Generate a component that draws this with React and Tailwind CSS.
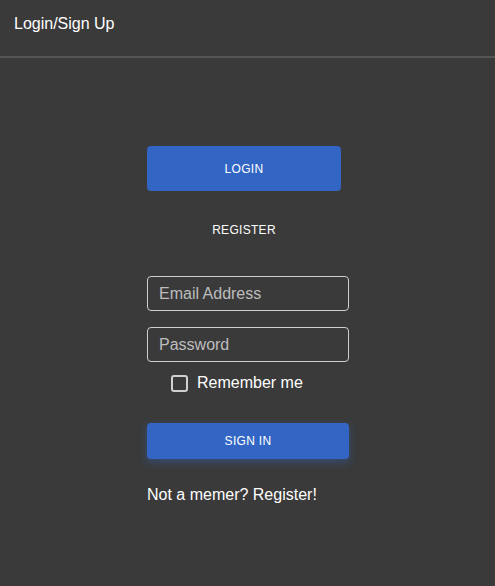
import { useState } from 'react'

const App = () => {
  const [remember, setRemember] = useState(false)

  return (
    <div className="min-h-screen bg-[#3a3a3a] text-white" style={{ fontFamily: '"Liberation Sans", Arial, sans-serif' }}>
      <header className="h-[58px] border-b-2 border-[#555555] flex items-center px-[14px] pb-[8px]">
        <span className="text-[16px]">Login/Sign Up</span>
      </header>

      <div className="flex flex-col pl-[147px] pt-[88px]">
        <div className="w-[194px] flex flex-col">
          <button className="h-[45px] rounded-[4px] bg-[#3366c4] text-[12px] font-medium tracking-wide">
            LOGIN
          </button>
          <button className="mt-[31px] text-[12px] font-medium tracking-wide text-center leading-[16px]">
            REGISTER
          </button>
        </div>

        <form className="w-[202px] flex flex-col mt-[38px]" onSubmit={(e) => e.preventDefault()}>
          <input
            type="email"
            placeholder="Email Address"
            className="h-[35px] rounded-[4px] border border-[#cfcfcf] bg-transparent px-[11px] text-[16px] placeholder-[#bdbdbd] focus:outline-none"
          />
          <input
            type="password"
            placeholder="Password"
            className="mt-[16px] h-[35px] rounded-[4px] border border-[#cfcfcf] bg-transparent px-[11px] text-[16px] placeholder-[#bdbdbd] focus:outline-none"
          />
          <label className="mt-[9px] ml-[24px] flex items-center gap-[9px] cursor-pointer">
            <span
              onClick={() => setRemember(!remember)}
              className={`w-[17px] h-[17px] rounded-[3px] border-2 border-[#d0d0d0] ${remember ? 'bg-[#3366c4]' : ''}`}
            />
            <span className="text-[16px]">Remember me</span>
          </label>
          <button
            type="submit"
            className="mt-[28px] h-[36px] rounded-[4px] bg-[#3366c4] text-[12px] font-medium tracking-wide shadow-[0_3px_8px_rgba(51,102,196,0.45)]"
          >
            SIGN IN
          </button>
          <p className="mt-[24px] text-[16px]">Not a memer? Register!</p>
        </form>
      </div>
    </div>
  )
}

export default App
